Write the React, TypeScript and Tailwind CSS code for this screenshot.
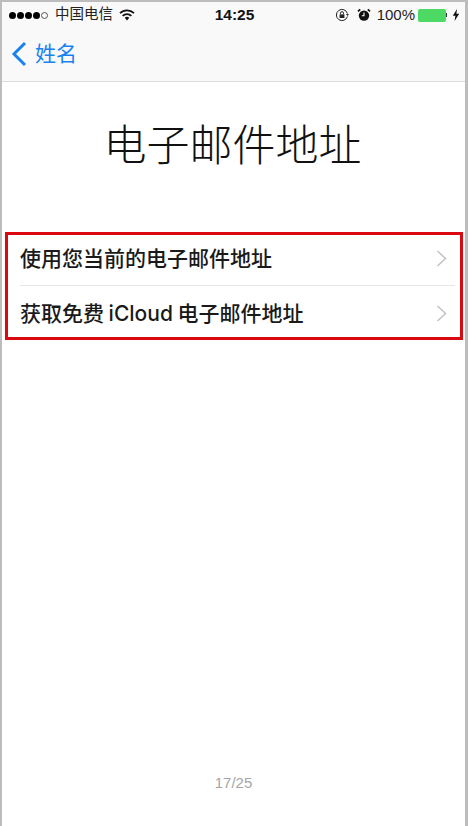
const font = "font-['Liberation_Sans','Noto_Sans_CJK_SC',sans-serif]"
const rowText = "font-['Inter','Noto_Sans_CJK_SC',sans-serif] text-[21px] leading-none font-medium text-[#1a1a1a] [word-spacing:-1px]"

function Chevron() {
  return (
    <svg width="11" height="17" viewBox="0 0 11 17" className="shrink-0">
      <path d="M1.5 1 9.5 8.5 1.5 16" fill="none" stroke="#c4c4c8" strokeWidth="1.6" />
    </svg>
  )
}

export default function App() {
  return (
    <div className={`${font} flex h-[826px] w-[468px] flex-col border-t-2 border-r-[3px] border-l-2 border-[#bdbdbd] bg-white`}>
      <header className="h-[80px] border-b border-[#dcdcdc] bg-[#f9f9f9]">
        <div className="flex h-[24px] items-center justify-between pr-[5px] pl-[7px] pt-[2px]">
          <div className="flex flex-1 items-center text-[14.5px] text-[#222]">
            <div className="flex items-center gap-[1px]">
              <span className="h-[7px] w-[7px] rounded-full bg-black" />
              <span className="h-[7px] w-[7px] rounded-full bg-black" />
              <span className="h-[7px] w-[7px] rounded-full bg-black" />
              <span className="h-[7px] w-[7px] rounded-full bg-black" />
              <span className="h-[7px] w-[7px] rounded-full border border-[#555]" />
            </div>
            <span className="ml-[7px]">中国电信</span>
            <svg width="16" height="12" viewBox="0 0 16 12" className="ml-[6px]">
              <path d="M1 4.2a10 10 0 0 1 14 0" fill="none" stroke="#111" strokeWidth="1.7" />
              <path d="M3.6 6.8a6.4 6.4 0 0 1 8.8 0" fill="none" stroke="#111" strokeWidth="1.7" />
              <path d="M5.7 8.8a3.4 3.4 0 0 1 4.6 0L8 11.4z" fill="#111" />
            </svg>
          </div>
          <span className="text-[15.5px] font-bold text-[#111]">14:25</span>
          <div className="flex flex-1 items-center justify-end text-[15px] text-[#222]">
            <svg width="14" height="14" viewBox="0 0 14 14">
              <path d="M12.4 8.5A5.6 5.6 0 1 1 12.4 5.5" fill="none" stroke="#222" strokeWidth="1" />
              <path d="M11 6h3l-1.5 2z" fill="#222" />
              <rect x="4.6" y="6.4" width="4.8" height="3.6" fill="#222" />
              <path d="M5.5 6.4V5.2a1.5 1.5 0 0 1 3 0v1.2" fill="none" stroke="#222" strokeWidth="1" />
            </svg>
            <svg width="14" height="14" viewBox="0 0 14 14" className="ml-[8px]">
              <circle cx="7" cy="7.6" r="5.2" fill="#111" />
              <path d="M1 3.4 3.2 1.4M13 3.4 10.8 1.4" stroke="#111" strokeWidth="1.8" />
              <path d="M7 4.6v3.2H4.8" fill="none" stroke="#fff" strokeWidth="1.1" />
            </svg>
            <span className="ml-[6px]">100%</span>
            <span className="ml-[3px] h-[13px] w-[28px] rounded-[2px] bg-[#4cd964]" />
            <span className="h-[4px] w-[1px] bg-[#333]" />
            <svg width="8" height="12" viewBox="0 0 8 12" className="ml-[5px]">
              <path d="M5 0 .8 6.8h2.6L2.6 12 7.2 4.8H4.4z" fill="#111" />
            </svg>
          </div>
        </div>
        <div className="flex h-[55px] items-center pl-[9px]">
          <svg width="16" height="26" viewBox="0 0 16 26">
            <path d="M14 2 3 13l11 11" fill="none" stroke="#1a82f0" strokeWidth="3" />
          </svg>
          <span className="ml-[8px] text-[21px] text-[#1a82f0]">姓名</span>
        </div>
      </header>
      <h1 className="mt-[41px] pr-[2px] text-center text-[43px] leading-[46px] font-light text-[#111]">电子邮件地址</h1>
      <section className="mt-[63px] mr-[2px] ml-[3px] border-[3px] border-[#d9090f]">
        <div className="ml-[12px] mr-[5px] flex h-[51px] items-center justify-between border-b border-[#e6e6e6] pr-[8px] pb-[4px]">
          <span className={rowText}>使用您当前的电子邮件地址</span>
          <Chevron />
        </div>
        <div className="ml-[12px] mr-[5px] flex h-[51px] items-center justify-between pr-[8px] pt-[3px]">
          <span className={rowText}>获取免费 iCloud 电子邮件地址</span>
          <Chevron />
        </div>
      </section>
      <footer className="mt-auto mb-[35px] text-center text-[15px] leading-[16px] text-[#a6a6a6]">17/25</footer>
    </div>
  )
}
